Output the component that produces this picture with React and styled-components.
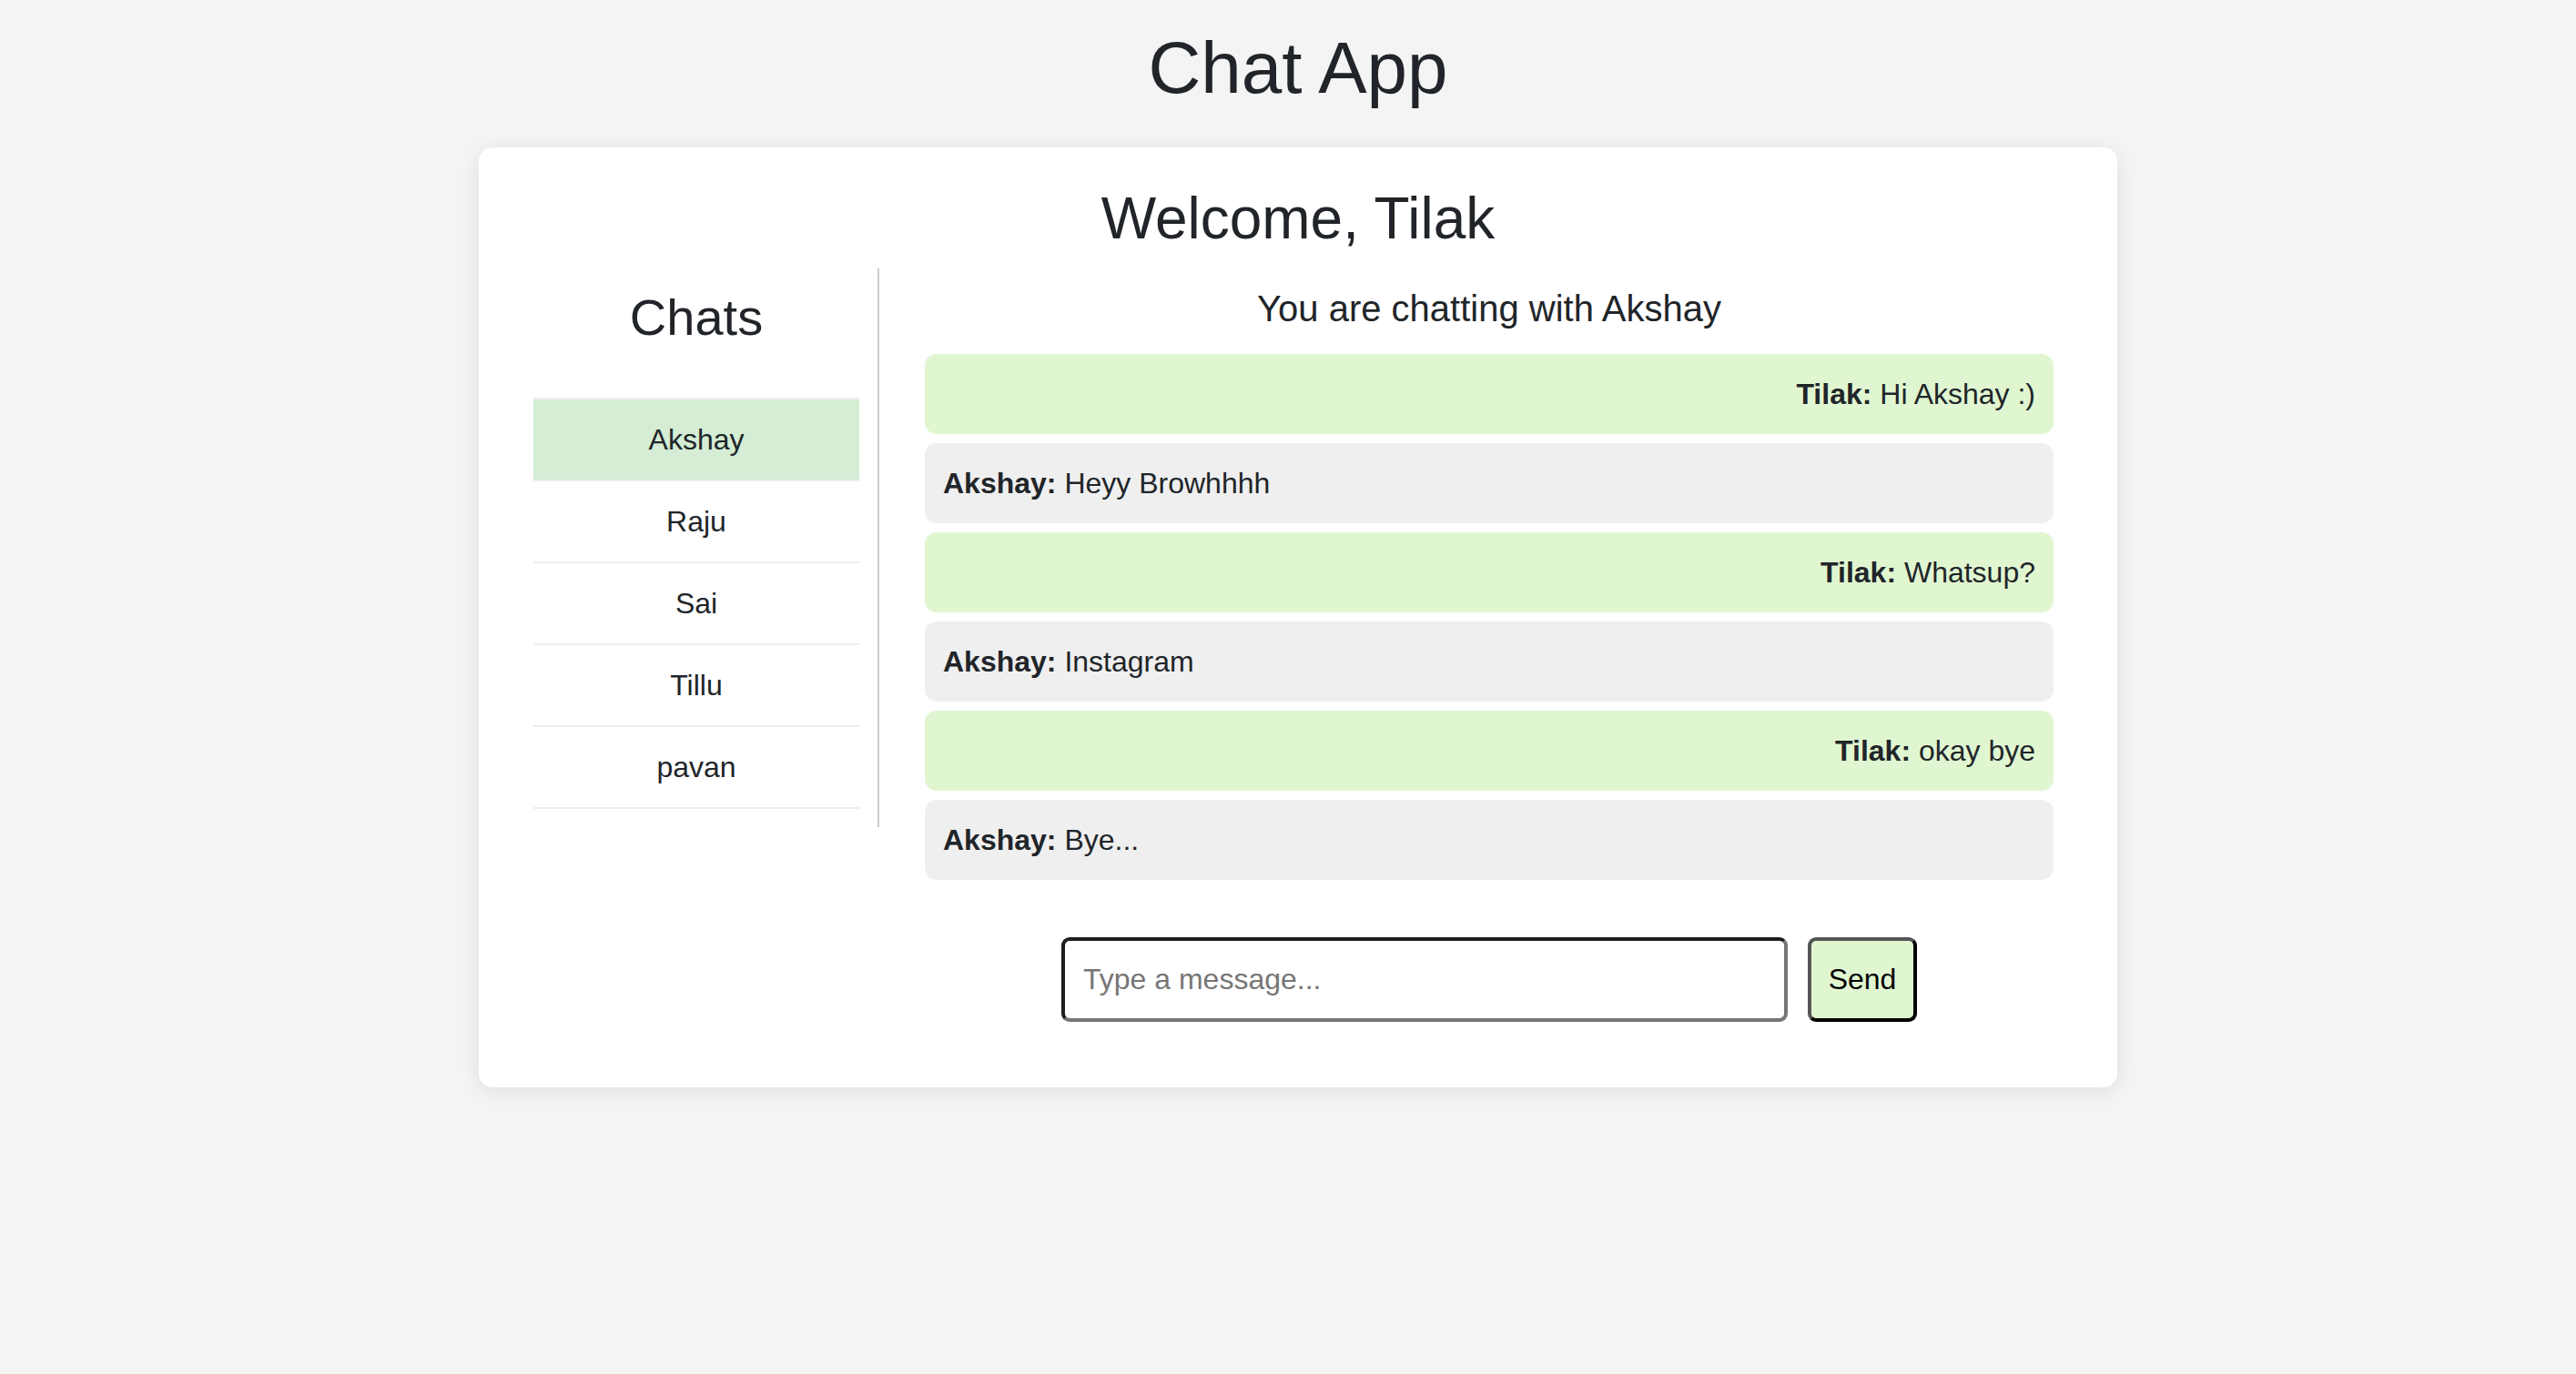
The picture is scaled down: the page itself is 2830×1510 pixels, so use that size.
import React, { useState } from "react";
import styled, { createGlobalStyle } from "styled-components";

const GlobalStyle = createGlobalStyle`
  * {
    box-sizing: border-box;
  }
  html, body {
    margin: 0;
    padding: 0;
    background: #f4f4f4;
    font-family: "Liberation Sans", Arial, Helvetica, sans-serif;
    color: #212529;
  }
`;

const chats = ["Akshay", "Raju", "Sai", "Tillu", "pavan"];

const messages = [
  { from: "Tilak", text: "Hi Akshay :)" },
  { from: "Akshay", text: "Heyy Browhhhh" },
  { from: "Tilak", text: "Whatsup?" },
  { from: "Akshay", text: "Instagram" },
  { from: "Tilak", text: "okay bye" },
  { from: "Akshay", text: "Bye..." },
];

const App = () => {
  const [active, setActive] = useState("Akshay");
  const [text, setText] = useState("");
  const me = "Tilak";

  return (
    <>
      <GlobalStyle />
      <Page>
        <Title>Chat App</Title>
        <Card>
          <Welcome>Welcome, {me}</Welcome>
          <Body>
            <Sidebar>
              <SideTitle>Chats</SideTitle>
              <List>
                {chats.map((name) => (
                  <Item
                    key={name}
                    $active={name === active}
                    onClick={() => setActive(name)}
                  >
                    {name}
                  </Item>
                ))}
              </List>
            </Sidebar>
            <Main>
              <ChatHead>You are chatting with {active}</ChatHead>
              <Messages>
                {messages.map((m, i) => (
                  <Bubble key={i} $mine={m.from === me}>
                    <b>{m.from}:</b> {m.text}
                  </Bubble>
                ))}
              </Messages>
              <Composer>
                <Input
                  type="text"
                  placeholder="Type a message..."
                  value={text}
                  onChange={(e) => setText(e.target.value)}
                />
                <SendButton>Send</SendButton>
              </Composer>
            </Main>
          </Body>
        </Card>
      </Page>
    </>
  );
};

export default App;

const Page = styled.div`
  padding: 29px 0 40px 22px;
`;

const Title = styled.h1`
  margin: 0 0 41px;
  font-size: 80px;
  font-weight: 400;
  text-align: center;
  line-height: 92px;
`;

const Card = styled.div`
  width: 1800px;
  margin: 0 auto;
  background: #fff;
  border-radius: 15px;
  box-shadow: 0 4px 22px rgba(0, 0, 0, 0.09);
  padding: 42px 40px 72px;
`;

const Welcome = styled.h2`
  margin: 0 0 18px;
  font-size: 64px;
  line-height: 73px;
  font-weight: 400;
  text-align: center;
`;

const Body = styled.div`
  display: flex;
  align-items: flex-start;
`;

const Sidebar = styled.div`
  width: 400px;
  flex-shrink: 0;
  padding: 22px 20px 20px;
  border-right: 2px solid #cccccc;
`;

const SideTitle = styled.h2`
  margin: 0 0 56px;
  font-size: 56px;
  line-height: 64px;
  font-weight: 400;
  text-align: center;
`;

const List = styled.ul`
  list-style: none;
  margin: 0;
  padding: 0;
  border-top: 2px solid #eeeeee;
`;

const Item = styled.li`
  height: 90px;
  display: flex;
  align-items: center;
  justify-content: center;
  font-size: 32px;
  border-bottom: 2px solid #eeeeee;
  background: ${(p) => (p.$active ? "#d4edd4" : "#fff")};
  cursor: pointer;
`;

const Main = styled.div`
  flex: 1;
  padding: 21px 30px 0 50px;
`;

const ChatHead = styled.h3`
  margin: 0 0 27px;
  font-size: 40px;
  line-height: 46px;
  font-weight: 400;
  text-align: center;
`;

const Messages = styled.div`
  display: flex;
  flex-direction: column;
  gap: 10px;
`;

const Bubble = styled.div`
  padding: 20px;
  line-height: 48px;
  font-size: 32px;
  border-radius: 13px;
  background: ${(p) => (p.$mine ? "#e0f6d1" : "#efefef")};
  text-align: ${(p) => (p.$mine ? "right" : "left")};

  b {
    font-weight: 700;
  }
`;

const Composer = styled.div`
  display: flex;
  justify-content: center;
  gap: 22px;
  margin-top: 63px;
`;

const Input = styled.input`
  width: 798px;
  height: 93px;
  padding: 0 20px;
  font-family: "Liberation Sans", Arial, sans-serif;
  font-size: 32px;
  color: #212529;
  border: 4px solid;
  border-color: #1e1e1e #767676 #767676 #1e1e1e;
  border-radius: 9px;
  outline: none;

  &::placeholder {
    color: #767676;
  }
`;

const SendButton = styled.button`
  width: 120px;
  height: 93px;
  font-family: "Liberation Sans", Arial, sans-serif;
  font-size: 32px;
  color: #000;
  background: #e0f6d1;
  border: 4px solid;
  border-color: #555555 #000 #000 #555555;
  border-radius: 9px;
  cursor: pointer;
`;
